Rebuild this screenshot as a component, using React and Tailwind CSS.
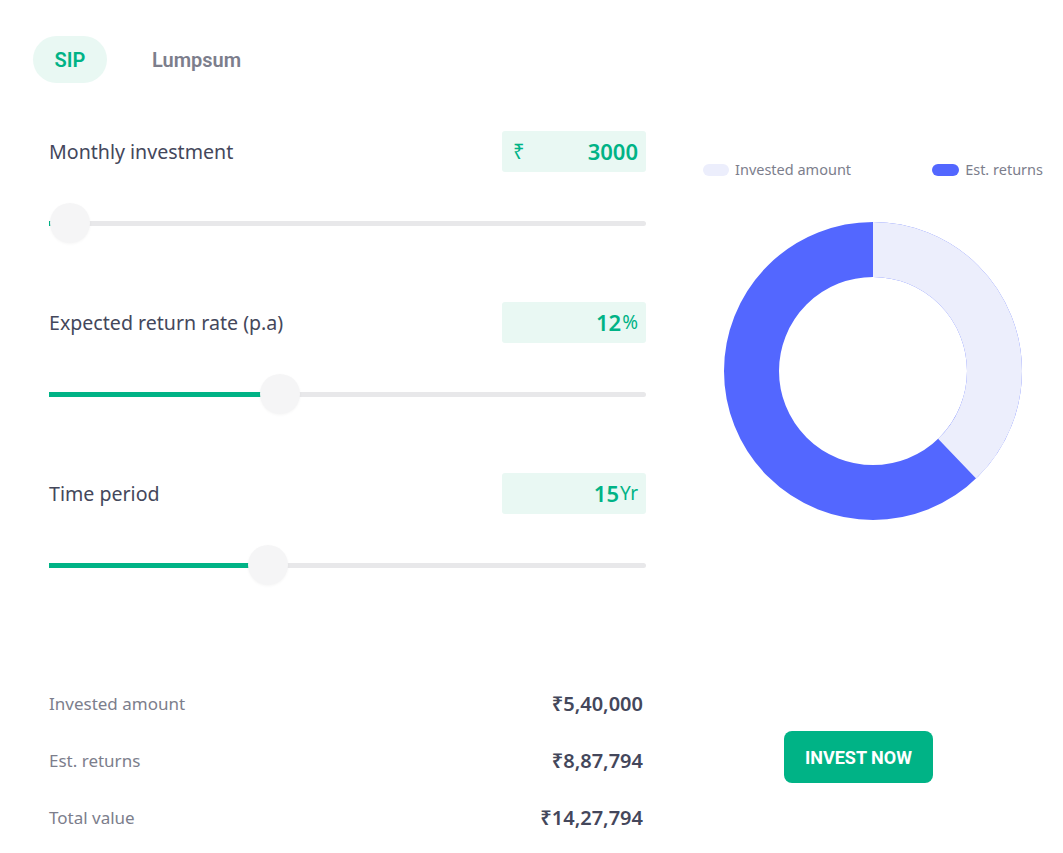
import React, { useState } from "react";

const rows = [
  { label: "Monthly investment", prefix: "₹", value: "3000", suffix: "", fill: 2, thumb: 21 },
  { label: "Expected return rate (p.a)", prefix: "", value: "12", suffix: "%", fill: 213, thumb: 231 },
  { label: "Time period", prefix: "", value: "15", suffix: "Yr", fill: 201, thumb: 219 },
];

const results = [
  { label: "Invested amount", value: "₹5,40,000" },
  { label: "Est. returns", value: "₹8,87,794" },
  { label: "Total value", value: "₹14,27,794" },
];

const Slider = ({ fill, thumb }) => {
  return (
    <div className="relative h-[40px] flex items-center">
      <div className="w-full h-[5px] bg-[#e8e8ea] rounded-full">
        <div className="h-[5px] bg-[#00b386]" style={{ width: fill }}></div>
      </div>
      <div
        className="absolute top-0 w-[40px] h-[40px] rounded-full bg-[#f5f5f6] shadow-[0_1px_3px_rgba(0,0,0,0.04)]"
        style={{ left: thumb - 20 }}
      ></div>
    </div>
  );
};

const Donut = () => {
  const r = 121.5;
  const c = 2 * Math.PI * r;
  const invested = 540000 / 1427794;
  return (
    <svg width="300" height="300" viewBox="0 0 300 300">
      <circle cx="150" cy="150" r={r} fill="none" stroke="#5367ff" strokeWidth="55" />
      <circle
        cx="150"
        cy="150"
        r={r}
        fill="none"
        stroke="#eceefc"
        strokeWidth="55"
        strokeDasharray={`${c * invested} ${c}`}
        transform="rotate(-90 150 150)"
      />
    </svg>
  );
};

const App = () => {
  const [tab, setTab] = useState("SIP");

  return (
    <div className="w-[1063px] h-[853px] bg-white pt-[36px] pl-[33px] font-['Noto_Sans',sans-serif]">
      {/* tabs */}
      <div className="flex items-center font-['Roboto',sans-serif] text-[20px] font-semibold">
        <button
          onClick={() => setTab("SIP")}
          className={`w-[74px] h-[47px] rounded-full ${tab === "SIP" ? "bg-[#e9f8f3] text-[#00b386]" : "text-[#7c7e8c]"}`}
        >
          SIP
        </button>
        <button
          onClick={() => setTab("Lumpsum")}
          className={`ml-[21px] h-[47px] px-[24px] rounded-full ${tab === "Lumpsum" ? "bg-[#e9f8f3] text-[#00b386]" : "text-[#7c7e8c]"}`}
        >
          Lumpsum
        </button>
      </div>

      <div className="flex items-start mt-[48px]">
        {/* left */}
        <div className="ml-[16px] w-[597px]">
          {rows.map((row, i) => (
            <div key={row.label} className={i === 0 ? "" : "mt-[59px]"}>
              <div className="flex items-center justify-between h-[41px]">
                <span className="text-[19.6px] text-[#44475b]">{row.label}</span>
                <div className="w-[144px] h-[41px] bg-[#e9f8f3] rounded-[3px] flex items-center px-[8px] text-[#00b386]">
                  <span className="text-[20px] ml-[3px]">{row.prefix}</span>
                  <span className="ml-auto text-[22px] font-semibold">{row.value}</span>
                  {row.suffix && <span className="text-[19px] ml-[1px]">{row.suffix}</span>}
                </div>
              </div>
              <div className="mt-[31px]">
                <Slider fill={row.fill} thumb={row.thumb} />
              </div>
            </div>
          ))}

          <div className="mt-[90px] w-[594px]">
            {results.map((r) => (
              <div key={r.label} className="h-[57px] flex items-center justify-between">
                <span className="text-[17px] text-[#7c7e8c]">{r.label}</span>
                <span className="text-[20px] font-semibold text-[#44475b]">{r.value}</span>
              </div>
            ))}
          </div>
        </div>

        {/* right */}
        <div className="ml-[54px] w-[346px]">
          <div className="mt-[29px] h-[20px] flex items-center justify-between px-[3px] text-[14.5px] text-[#7c7e8c]">
            <div className="flex items-center">
              <span className="w-[26px] h-[12px] rounded-full bg-[#eceefc]"></span>
              <span className="ml-[6px]">Invested amount</span>
            </div>
            <div className="flex items-center">
              <span className="w-[27px] h-[12px] rounded-full bg-[#5367ff]"></span>
              <span className="ml-[6px]">Est. returns</span>
            </div>
          </div>
          <div className="mt-[41px] flex justify-center">
            <Donut />
          </div>
          <button className="mt-[210px] ml-[84px] w-[149px] h-[52px] rounded-[8px] bg-[#00b386] text-white font-['Roboto',sans-serif] font-bold text-[18px]">
            INVEST NOW
          </button>
        </div>
      </div>
    </div>
  );
};

export default App;
